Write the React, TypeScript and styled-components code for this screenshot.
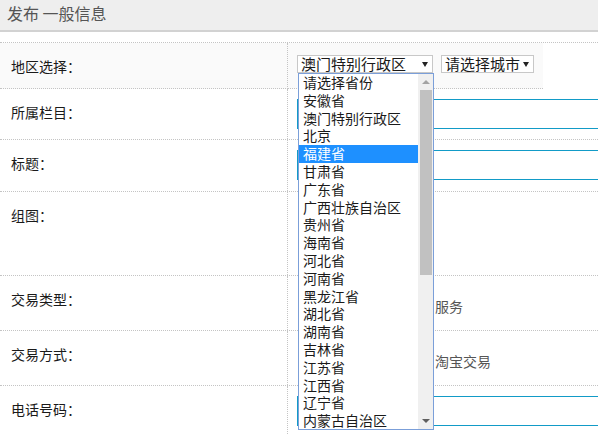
import React from "react";
import styled, { createGlobalStyle } from "styled-components";

const GlobalStyle = createGlobalStyle`
  html, body {
    margin: 0;
    padding: 0;
    background: #ffffff;
    overflow: hidden;
  }
  body {
    font-family: "Noto Sans CJK SC", "Noto Sans", sans-serif;
    color: #222;
  }
`;

const Page = styled.div`
  position: relative;
  width: 598px;
  height: 435px;
  overflow: hidden;
`;

const Header = styled.div`
  height: 30px;
  background: #eeeeee;
  border-bottom: 2px solid #d2d2d2;
  padding-left: 7px;
  font-size: 16px;
  line-height: 27px;
  color: #555;
`;

const Form = styled.div`
  margin-top: 10px;
  border-top: 1px dotted #c4c4c4;
`;

const Row = styled.div<{ $h: number; $noLine?: boolean }>`
  display: grid;
  grid-template-columns: 288px 1fr;
  height: ${(p) => p.$h}px;
  box-sizing: border-box;
  border-bottom: ${(p) => (p.$noLine ? "none" : "1px dotted #c4c4c4")};
`;

const Label = styled.div<{ $shade?: boolean }>`
  border-right: 1px dotted #c4c4c4;
  padding: 13px 0 0 11px;
  font-size: 14px;
  line-height: 20px;
  color: #1a1a1a;
  background: ${(p) => (p.$shade ? "#fafafa" : "transparent")};
  box-sizing: border-box;
  border-bottom: ${(p) => (p.$shade ? "1px dotted #c4c4c4" : "none")};
`;

const Field = styled.div<{ $top?: number }>`
  padding: ${(p) => p.$top ?? 10}px 0 0 9px;
  box-sizing: border-box;
  overflow: hidden;
`;

const RegionBox = styled.div`
  width: 255px;
  height: 46px;
  box-sizing: border-box;
  background: #fafafa;
  border-bottom: 1px dotted #c4c4c4;
  padding: 12px 0 0 9px;
  display: flex;
  gap: 8px;
`;

const Select = styled.div<{ $w: number }>`
  position: relative;
  width: ${(p) => p.$w}px;
  height: 18px;
  box-sizing: border-box;
  border: 1px solid #c8c8c8;
  background: #fff;
  font-size: 15px;
  line-height: 16px;
  padding-left: 3px;
  color: #1a1a1a;
  white-space: nowrap;
`;

const Caret = styled.span`
  position: absolute;
  right: 4px;
  top: 6px;
  width: 0;
  height: 0;
  border-left: 3px solid transparent;
  border-right: 3px solid transparent;
  border-top: 5px solid #222;
`;

const TextInput = styled.div`
  width: 420px;
  height: 30px;
  box-sizing: border-box;
  border: 1px solid #129bc7;
  background: #fff;
`;

const Options = styled.div`
  display: flex;
  padding: 20px 0 0 121px;
  font-size: 14px;
  line-height: 20px;
  color: #555;
`;

const Option = styled.label`
  display: inline-flex;
  align-items: center;
  gap: 4px;
  margin-right: 14px;
  white-space: nowrap;
`;

const Radio = styled.span`
  width: 11px;
  height: 11px;
  border: 1px solid #999;
  border-radius: 50%;
  background: #fff;
`;

const ListBox = styled.div`
  position: absolute;
  left: 298px;
  top: 73px;
  width: 136px;
  height: 357px;
  box-sizing: border-box;
  border: 1px solid #7b9fd9;
  background: #fff;
  display: flex;
  overflow: hidden;
`;

const Items = styled.ul`
  flex: 1;
  margin: 0;
  padding: 0;
  list-style: none;
`;

const Item = styled.li<{ $active?: boolean }>`
  height: 17.8px;
  line-height: 17.8px;
  padding-left: 4px;
  font-size: 14px;
  white-space: nowrap;
  color: ${(p) => (p.$active ? "#fff" : "#1a1a1a")};
  background: ${(p) => (p.$active ? "#1e90ff" : "transparent")};
`;

const ScrollTrack = styled.div`
  width: 15px;
  background: #f0f0f0;
  display: flex;
  flex-direction: column;
  align-items: center;
`;

const ArrowBtn = styled.div<{ $down?: boolean }>`
  height: 16px;
  width: 15px;
  display: flex;
  align-items: center;
  justify-content: center;
  &::after {
    content: "";
    width: 0;
    height: 0;
    border-left: 4px solid transparent;
    border-right: 4px solid transparent;
    ${(p) =>
      p.$down
        ? "border-top: 4px solid #5f5f5f;"
        : "border-bottom: 4px solid #a3a3a3;"}
  }
`;

const Thumb = styled.div`
  width: 12px;
  height: 185px;
  margin-left: 2px;
  margin-right: 1px;
  background: #c1c1c1;
`;

const Spacer = styled.div`
  flex: 1;
`;

const provinces = [
  "请选择省份",
  "安徽省",
  "澳门特别行政区",
  "北京",
  "福建省",
  "甘肃省",
  "广东省",
  "广西壮族自治区",
  "贵州省",
  "海南省",
  "河北省",
  "河南省",
  "黑龙江省",
  "湖北省",
  "湖南省",
  "吉林省",
  "江苏省",
  "江西省",
  "辽宁省",
  "内蒙古自治区",
];

export default function App() {
  return (
    <Page>
      <GlobalStyle />
      <Header>发布 一般信息</Header>
      <Form>
        <Row $h={46} $noLine>
          <Label $shade>地区选择：</Label>
          <RegionBox>
            <Select $w={136}>
              澳门特别行政区
              <Caret />
            </Select>
            <Select $w={93}>
              请选择城市
              <Caret />
            </Select>
          </RegionBox>
        </Row>
        <Row $h={51}>
          <Label>所属栏目：</Label>
          <Field>
            <TextInput />
          </Field>
        </Row>
        <Row $h={52}>
          <Label>标题：</Label>
          <Field>
            <TextInput />
          </Field>
        </Row>
        <Row $h={84}>
          <Label>组图：</Label>
          <Field />
        </Row>
        <Row $h={55}>
          <Label>交易类型：</Label>
          <Field $top={0}>
            <Options>
              <Option><Radio />服务</Option>
            </Options>
          </Field>
        </Row>
        <Row $h={55}>
          <Label>交易方式：</Label>
          <Field $top={0}>
            <Options>
              <Option><Radio />淘宝交易</Option>
            </Options>
          </Field>
        </Row>
        <Row $h={60} $noLine>
          <Label>电话号码：</Label>
          <Field>
            <TextInput />
          </Field>
        </Row>
      </Form>
      <ListBox>
        <Items>
          {provinces.map((p, i) => (
            <Item key={p} $active={i === 4}>
              {p}
            </Item>
          ))}
        </Items>
        <ScrollTrack>
          <ArrowBtn />
          <Thumb />
          <Spacer />
          <ArrowBtn $down />
        </ScrollTrack>
      </ListBox>
    </Page>
  );
}
